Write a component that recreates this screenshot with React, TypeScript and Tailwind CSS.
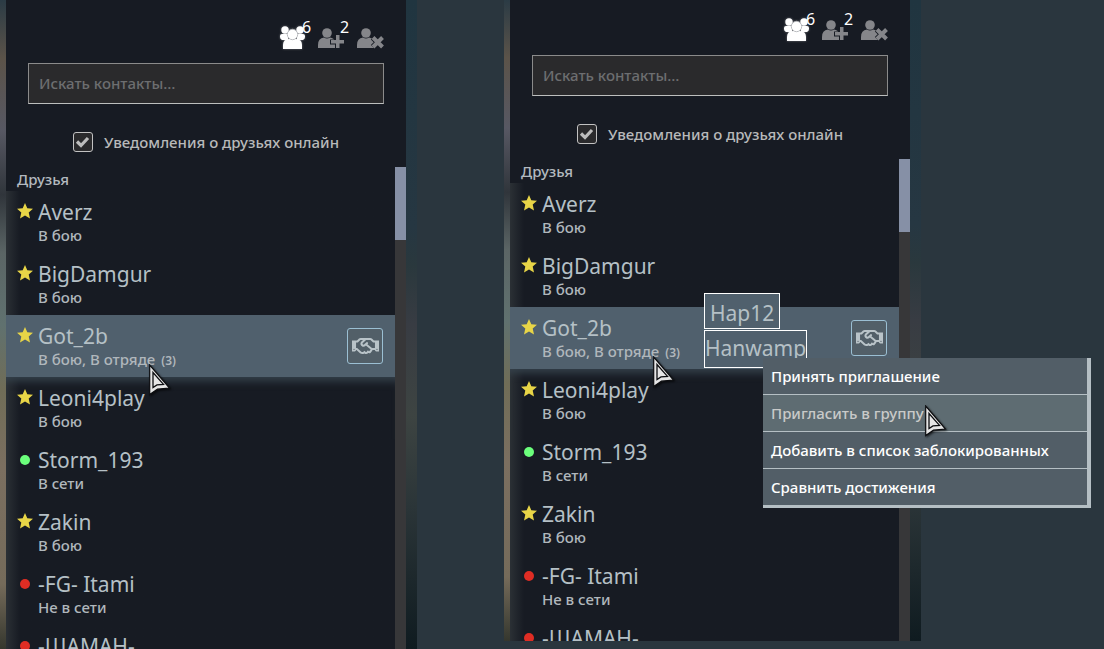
import clsx from "clsx";
import { FaRegHandshake } from "react-icons/fa";

type Presence = "star" | "online" | "offline";

interface Friend {
  name: string;
  status?: string;
  presence: Presence;
  squad?: number;
}

const friends: Friend[] = [
  { name: "Averz", status: "В бою", presence: "star" },
  { name: "BigDamgur", status: "В бою", presence: "star" },
  { name: "Got_2b", status: "В бою, В отряде", presence: "star", squad: 3 },
  { name: "Leoni4play", status: "В бою", presence: "star" },
  { name: "Storm_193", status: "В сети", presence: "online" },
  { name: "Zakin", status: "В бою", presence: "star" },
  { name: "-FG- Itami", status: "Не в сети", presence: "offline" },
  { name: "-ШАМАН-", presence: "offline" },
];

const menuItems = [
  "Принять приглашение",
  "Пригласить в группу",
  "Добавить в список заблокированных",
  "Сравнить достижения",
];

const GroupIcon = () => (
  <svg viewBox="0 0 25 23" className="w-[25px] h-[23px] drop-shadow-[0_0_1px_#ffffff60]" fill="#fff">
    <circle cx="5" cy="4" r="3.7" />
    <circle cx="20" cy="4" r="3.7" />
    <path d="M0 10q0-2 2-2h6v6H2q-2-1-2-3zM25 10q0-2-2-2h-6v6h6q2-1 2-3z" />
    <path d="M3 23v-4q0-6 6-6h7q6 0 6 6v4z" />
    <circle cx="12.5" cy="8.5" r="5.2" stroke="#b4b7ba" strokeWidth="0.9" />
  </svg>
);

const PersonShape = () => (
  <>
    <circle cx="9" cy="5" r="4.8" />
    <path d="M0 20v-3q0-7 6-7.500 3 2 6 0 4 .5 5 4V20z" />
  </>
);

const AddIcon = () => (
  <svg viewBox="0 0 27 21" className="w-[27px] h-[21px]" fill="#85868a">
    <PersonShape />
    <path d="M17 6.500h5.500v5H27v5h-4.500V21H17v-4.500h-5v-5h5z" fill="#171b23" />
    <path d="M18 7h3.500v5H26v3.500h-4.500V20H18v-4.500h-5V12h5z" />
  </svg>
);

const RemoveIcon = () => (
  <svg viewBox="0 0 27 21" className="w-[27px] h-[21px]" fill="#85868a">
    <PersonShape />
    <path d="M16 9.500l9.500 9.500M25.500 9.500L16 19" stroke="#171b23" strokeWidth="6" />
    <path d="M16 9.500l9.500 9.500M25.500 9.500L16 19" stroke="#85868a" strokeWidth="4" />
  </svg>
);

const Cursor = ({ className }: { className: string }) => (
  <svg
    viewBox="0 0 22 33"
    className={clsx("absolute w-[22px] h-[33px] pointer-events-none drop-shadow-[1px_1px_1px_#000000b0]", className)}
  >
    <path d="M.7 1v29.500l7.800-5.300 12-1.200z" fill="#e6e6e6" stroke="#0c0d10" strokeWidth="1.2" />
    <path d="M4 8.500v15l4-2.600 6.500-.5z" fill="#e6e6e6" stroke="#0c0d10" strokeWidth="1.3" />
  </svg>
);

const PresenceMark = ({ presence }: { presence: Presence }) => {
  if (presence === "star") {
    return (
      <svg viewBox="0 0 16 16" className="w-4 h-4" fill="#e8d547">
        <path d="M8 0l2.300 5.200 5.700.5-4.300 3.900 1.300 5.900-5-3.100-5 3.100 1.300-5.900L0 5.700l5.700-.5z" />
      </svg>
    );
  }
  return (
    <span className={clsx("mt-0.5 w-2.5 h-2.5 rounded-full", presence === "online" ? "bg-[#6bff7c]" : "bg-[#df2d24]")} />
  );
};

const FriendRow = ({ friend, selected, afterSelected }: { friend: Friend; selected: boolean; afterSelected: boolean }) => (
  <li
    className={clsx(
      "h-[62px] shrink-0 flex items-start pt-1.5 pr-3",
      selected ? "bg-[#50606d]" : "bg-linear-to-r from-[#2b3035] to-[#171b23] to-[14px]",
      afterSelected && "shadow-[inset_0_10px_9px_-6px_#36424c]"
    )}
  >
    <span className="w-8 h-7 pl-[11px] flex items-center">
      <span className="w-4 flex justify-center">
        <PresenceMark presence={friend.presence} />
      </span>
    </span>
    <div className="flex-1 whitespace-nowrap">
      <p className="text-[21px] leading-[30px] text-[#b5c0c6]">{friend.name}</p>
      {friend.status && (
        <p className="text-[15px] leading-4 font-medium text-[#b0b7bc]">
          {friend.status}
          {friend.squad && <span className="text-xs font-semibold ml-1.5">({friend.squad})</span>}
        </p>
      )}
    </div>
    {selected && (
      <button
        aria-label={friend.name}
        className="w-9 h-9 mt-[7px] rounded-[3px] border border-[#9bbfd3] bg-[#525f68] flex items-center justify-center"
      >
        <FaRegHandshake className="w-[27px] h-[22px] text-[#b9c3c8]" />
      </button>
    )}
  </li>
);

const ContactsPanel = ({ id, scrolled = false }: { id: string; scrolled?: boolean }) => (
  <section className="h-full flex overflow-hidden">
    <div className="w-1.5 shrink-0 bg-[linear-gradient(#2b3b45_0%,#5b5349_9%,#575863_20%,#30353b_30%,#5b6565_39%,#60716f_50%,#706d57_60%,#7b6f60_72%,#756b5a_90%,#35372e_100%)]" />
    <div className="flex-1 min-w-0 flex flex-col bg-[#171b23]">
      <header className={clsx("px-[22px] pb-[15px]", scrolled ? "pt-[9px]" : "pt-[17px]")}>
        <div className="h-[34px] flex justify-end items-end gap-3">
          <button aria-label="6" className="relative pb-0.5 mr-px">
            <GroupIcon />
            <span className="absolute left-[22px] -top-[7px] text-base leading-4 text-white">6</span>
          </button>
          <button aria-label="2" className="relative pb-0.5">
            <AddIcon />
            <span className="absolute left-[22px] -top-[9px] text-base leading-4 text-white">2</span>
          </button>
          <button className="pb-0.5">
            <RemoveIcon />
          </button>
        </div>
        <input
          type="text"
          aria-label="Искать контакты…"
          placeholder="Искать контакты…"
          className="mt-3 block w-full h-[41px] px-2.5 pb-0.5 bg-[#2a2a2c] border border-[#8b8b8b] border-b-[#bdbfbe] text-[15px] font-medium text-[#bfbfbf] placeholder:text-[#6d6e70] outline-none"
        />
        <div className="mt-7 h-5 flex items-center justify-center gap-[11px]">
          <span className="relative w-5 h-5">
            <input
              id={id}
              type="checkbox"
              defaultChecked
              className="block appearance-none w-5 h-5 rounded-[3px] border border-[#c2c2c2] bg-[#2a2a2c]"
            />
            <svg viewBox="0 0 20 20" className="absolute inset-0 w-5 h-5 pointer-events-none" fill="none">
              <path d="M4 9.500l4 4 7-7.500" stroke="#bdbdbd" strokeWidth="3.2" />
            </svg>
          </span>
          <label htmlFor={id} className="text-[15px] leading-5 font-medium text-[#b8b9ba] whitespace-nowrap">
            Уведомления о друзьях онлайн
          </label>
        </div>
      </header>

      <div className="flex-1 min-h-0 flex">
        <div className="flex-1 min-w-0 overflow-hidden">
          <h2 className="h-6 pl-[11px] text-[15px] leading-6 font-medium text-[#b3b9bf]">Друзья</h2>
          <ul className="flex flex-col">
            {friends.map((friend, i) => (
              <FriendRow key={friend.name} friend={friend} selected={i === 2} afterSelected={i === 3} />
            ))}
          </ul>
        </div>
        <div className="w-[11px] bg-[#373739]">
          <div className="h-[73px] bg-[#8690a6]" />
        </div>
      </div>
    </div>
    <div className="w-[11px] shrink-0 bg-[linear-gradient(#203540_0%,#263742_35%,#2a383d_41%,#383c43_50%,#3d4442_64%,#2b3538_78%,#0f1b20_100%)]" />
  </section>
);

const ContextMenu = () => (
  <div className="absolute left-[259px] top-[358px] w-[328px] border-r-4 border-b-[3px] border-[#b5bfc4]">
    {menuItems.map((item, i) => (
      <button
        key={item}
        className={clsx(
          "block w-full px-2 text-left text-[15px] leading-9 font-medium whitespace-nowrap border-[#b5bfc4]",
          i < menuItems.length - 1 && "border-b",
          i === 1 ? "bg-[#5e6c72] text-[#c9cac9]" : "bg-[#525e67] text-white"
        )}
      >
        {item}
      </button>
    ))}
    <Cursor className="left-[162px] top-[47px]" />
  </div>
);

export default function App() {
  return (
    <main className="h-screen overflow-hidden flex gap-[87px] bg-[#2a363e] font-['Noto_Sans',sans-serif]">
      <div className="relative flex-1 max-w-[417px]">
        <ContactsPanel id="notify-left" />
        <Cursor className="left-[149px] top-[364px]" />
      </div>

      <div className="relative flex-1 max-w-[417px] mb-2">
        <ContactsPanel id="notify-right" scrolled />
        <Cursor className="left-[149px] top-[356px]" />
        {/* Squad members */}
        <div className="absolute left-[200px] top-[293px] flex flex-col items-start gap-px text-[21px] text-[#b5c0c6]">
          <span className="h-9 px-[5px] leading-[38px] border border-white bg-[#50606d]">Hap12</span>
          <span className="h-[38px] leading-[34px] border border-white bg-[#50606d]">Hanwamp</span>
        </div>
        <ContextMenu />
      </div>
    </main>
  );
}
